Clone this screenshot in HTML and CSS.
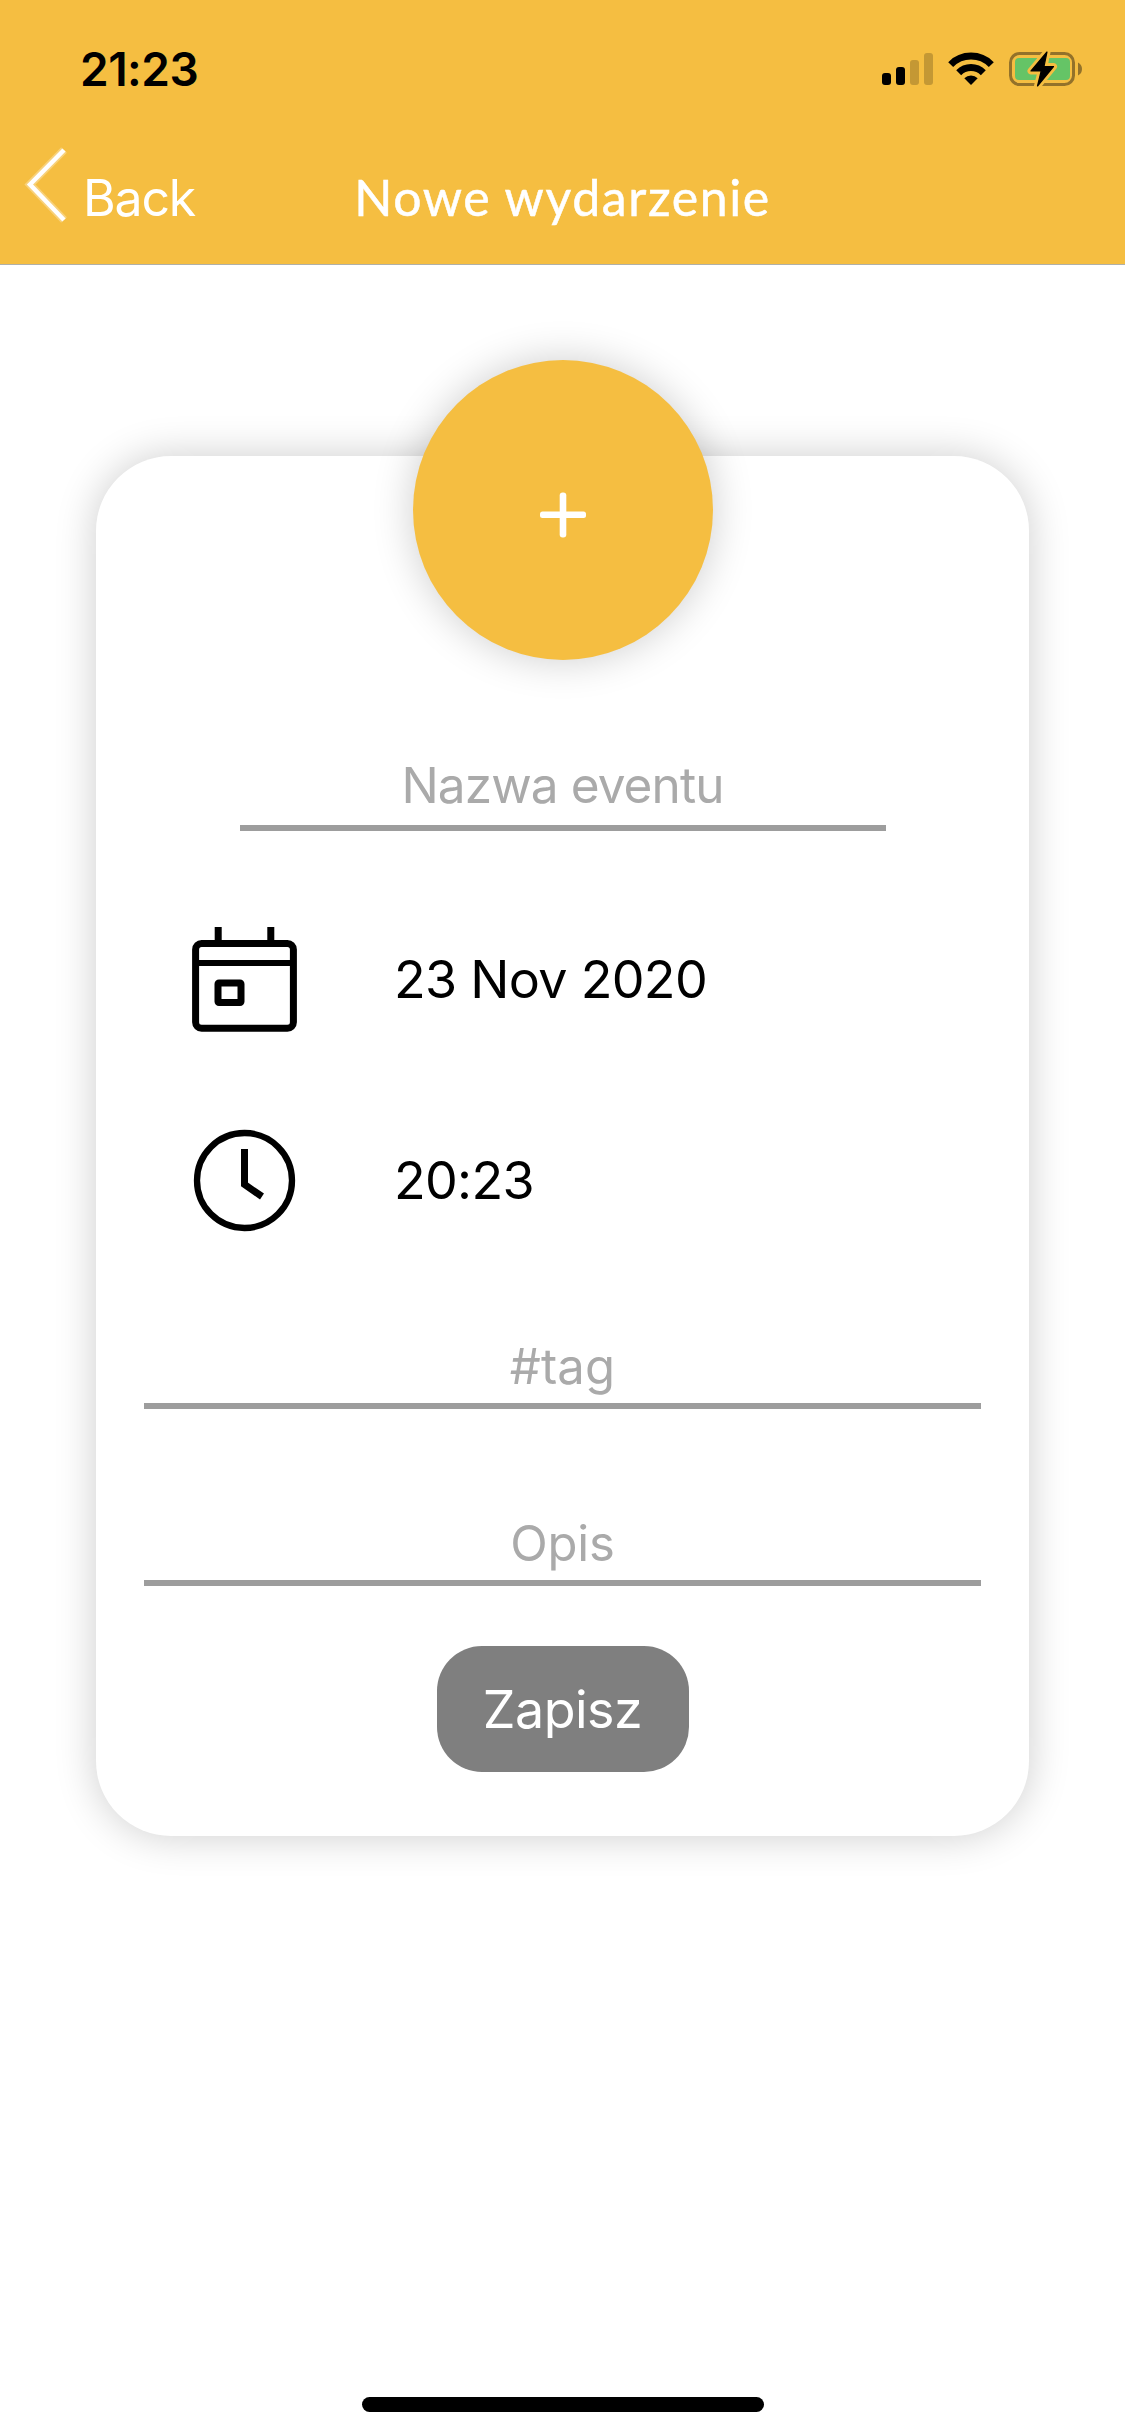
FILE: index.html
```html
<!DOCTYPE html>
<html lang="pl">
<head>
<meta charset="utf-8">
<title>Nowe wydarzenie</title>
<link rel="stylesheet" href="styles.css">
</head>
<body>
<header class="header">
  <div class="status">
    <span class="status-time">21:23</span>
    <svg class="status-icons" width="204" height="38" viewBox="880 50 204 38" aria-hidden="true">
      <!-- signal -->
      <rect x="882" y="73" width="9" height="12" rx="3"/>
      <rect x="896" y="67" width="9" height="18" rx="3"/>
      <rect x="910" y="60" width="9" height="25" rx="3" opacity=".2"/>
      <rect x="924" y="53" width="9" height="32" rx="3" opacity=".2"/>
      <!-- wi-fi -->
      <g fill="none" stroke="#000" stroke-width="7">
        <path d="M950.7 64.6a28.5 28.5 0 0 1 40.6 0"/>
        <path d="M958.7 72.7a17.4 17.4 0 0 1 24.6 0"/>
      </g>
      <path d="M964.3 78.2a9.6 9.6 0 0 1 13.4 0L971 85z"/>
      <!-- battery -->
      <rect x="1010.5" y="53.5" width="63" height="31" rx="9" fill="none" stroke="#93722a" stroke-width="3"/>
      <path d="M1078 62.5q4 2 4 6.5t-4 6.5z" fill="#93722a"/>
      <rect x="1015" y="58" width="55" height="22" rx="4" fill="#65c466"/>
      <path class="bolt-gap" d="M1047 52L1031 71h10.200l-3.700 15L1053.500 66.500h-9.500z"/>
      <path class="bolt" d="M1047 52L1031 71h10.200l-3.700 15L1053.500 66.500h-9.500z"/>
    </svg>
  </div>
  <nav class="nav">
    <a class="back">
      <svg class="chevron" width="44" height="84" viewBox="0 0 44 84" aria-hidden="true">
        <path class="chevron-edge" d="M40 7L6 41.500L40 77"/>
        <path class="chevron-line" d="M40 7L6 41.500L40 77"/>
      </svg>
      <span class="back-label">Back</span>
    </a>
    <h1 class="title">Nowe wydarzenie</h1>
  </nav>
</header>

<main class="main">
  <form class="card">
    <button class="add" type="button" aria-label="Dodaj">
      <svg width="46" height="46" viewBox="0 0 46 46" aria-hidden="true">
        <rect x="0" y="19.500" width="46" height="6.500" rx="2.500"/>
        <rect x="19.700" y="0.500" width="6.600" height="45" rx="3"/>
      </svg>
    </button>
    <input class="field field-name" placeholder="Nazwa eventu">
    <div class="rows">
      <div class="row">
        <svg width="105" height="105" viewBox="0 0 105 105" aria-hidden="true">
          <g class="ink">
            <rect x="3.600" y="16.500" width="97.800" height="84.700" rx="6"/>
            <path d="M3.500 36H101.500" stroke-width="6"/>
            <path d="M26.200 0V14M78.800 0V14"/>
            <rect x="26" y="56" width="23" height="19.500" rx="1"/>
          </g>
        </svg>
        <span class="value">23 Nov 2020</span>
      </div>
      <div class="row">
        <svg width="105" height="105" viewBox="0 0 105 105" aria-hidden="true">
          <g class="ink">
            <circle cx="52.500" cy="52.500" r="47.500" stroke-width="6.300"/>
            <path d="M52.500 21V56.500L70 68.500"/>
          </g>
        </svg>
        <span class="value">20:23</span>
      </div>
    </div>
    <input class="field field-tag" placeholder="#tag">
    <input class="field field-desc" placeholder="Opis">
    <button class="save" type="button">Zapisz</button>
  </form>
</main>
<div class="home"></div>
</body>
</html>
```
FILE: styles.css
```css
* { box-sizing: border-box; }
body {
  margin: 0;
  min-height: 2436px;
  display: flex;
  flex-direction: column;
  background: #fff;
  color: #000;
  font-family: Inter, "Liberation Sans", sans-serif;
}
.header {
  height: 265px;
  background: #f5be41;
  border-bottom: 1px solid #b0b0a8;
}
.status {
  height: 137px;
  padding: 0 41px 0 80px;
  display: flex;
  align-items: center;
  justify-content: space-between;
}
.status-time {
  font-size: 46px;
  font-weight: 600;
  letter-spacing: -0.5px;
}
.bolt-gap {
  fill: #f5be41;
  stroke: #f5be41;
  stroke-width: 7;
  stroke-linejoin: round;
}
.bolt {
  stroke: #000;
  stroke-width: 1.2;
  stroke-linejoin: round;
}
.nav {
  display: grid;
  grid-template-columns: 1fr auto 1fr;
  align-items: start;
  color: #fff;
}
.back {
  display: flex;
  align-items: flex-start;
  padding-left: 24px;
}
.chevron {
  margin: 6px 15px 0 0;
  fill: none;
  stroke: #fff;
}
.chevron-edge { stroke-width: 8; opacity: .3; }
.chevron-line { stroke-width: 4.5; }
.back-label {
  font-size: 50px;
  line-height: 123px;
  letter-spacing: -1.2px;
}
.title {
  margin: 0;
  font-family: Lato, sans-serif;
  font-size: 50px;
  font-weight: 400;
  line-height: 120px;
  letter-spacing: 1.6px;
  -webkit-text-stroke: .5px #fff;
}
.main { padding: 191px 96px 0; }
.card {
  height: 1380px;
  padding: 0 48px 64px;
  display: flex;
  flex-direction: column;
  align-items: center;
  background: #fff;
  border-radius: 75px;
  box-shadow: 0 0 42px rgba(0, 0, 0, .2);
}
.add {
  flex: none;
  width: 300px;
  height: 300px;
  margin: -96px 0 0;
  padding: 9px 0 0;
  display: flex;
  align-items: center;
  justify-content: center;
  border: 0;
  border-radius: 50%;
  background: #f5be41;
  fill: #fff;
  box-shadow: 0 0 42px rgba(0, 0, 0, .2);
}
.field {
  width: 100%;
  padding: 0;
  border: 0;
  border-bottom: 6px solid #9d9d9d;
  background: none;
  font: 400 49px Inter, "Liberation Sans", sans-serif;
  text-align: center;
}
.field::placeholder { color: #aaa; opacity: 1; }
.field-name {
  width: 646px;
  height: 86px;
  margin-top: 85px;
  font-size: 49.5px;
  letter-spacing: -0.9px;
}
.rows {
  align-self: stretch;
  margin-top: 96px;
  padding-left: 48px;
  display: flex;
  flex-direction: column;
  gap: 96px;
}
.row {
  display: flex;
  gap: 97px;
}
.ink {
  fill: none;
  stroke: #000;
  stroke-width: 7;
}
.value {
  font-size: 52px;
  line-height: 105px;
  letter-spacing: -0.7px;
}
.field-tag {
  height: 80px;
  margin-top: 96px;
  letter-spacing: .2px;
}
.field-desc {
  height: 80px;
  margin-top: 97px;
  letter-spacing: -0.2px;
}
.save {
  width: 252px;
  height: 126px;
  margin-top: 60px;
  padding: 0;
  border: 0;
  border-radius: 45px;
  background: #7f7f7f;
  color: #fff;
  font: 400 52px Inter, "Liberation Sans", sans-serif;
  letter-spacing: -0.5px;
}
.home {
  width: 402px;
  height: 15px;
  margin: auto auto 24px;
  border-radius: 8px;
  background: #000;
}
```
